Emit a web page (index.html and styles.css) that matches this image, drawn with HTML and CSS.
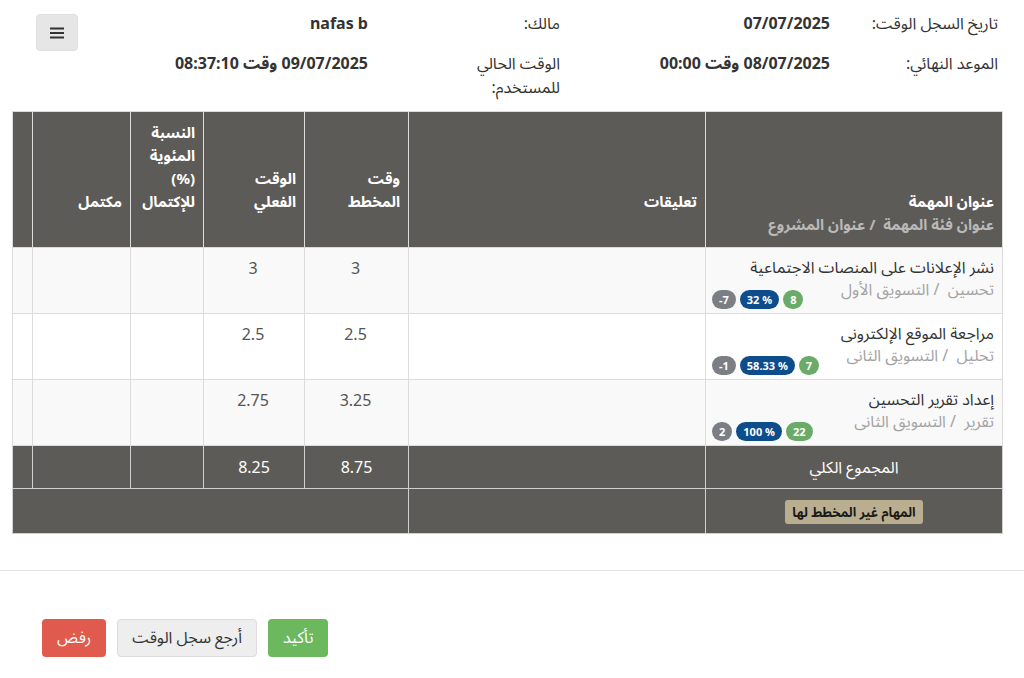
FILE: index.html
```html
<!DOCTYPE html>
<html lang="ar" dir="rtl">
<head>
    <meta charset="UTF-8">
    <meta name="viewport" content="width=device-width, initial-scale=1.0">
    <title>سجل الوقت</title>
    <link rel="stylesheet" href="styles.css">
</head>
<body>
    <!-- Timesheet details -->
    <div class="sheet-body">
        <div class="info-grid">
            <div class="info-label">تاريخ السجل الوقت:</div>
            <div class="info-value">07/07/2025</div>
            <div class="info-label narrow">مالك:</div>
            <div class="info-value owner">
                <span>nafas b</span>
                <button class="menu-btn" type="button">
                    <svg width="14" height="12" viewBox="0 0 14 12">
                        <rect x="0" y="0.5" width="14" height="2" fill="#333"/>
                        <rect x="0" y="5" width="14" height="2" fill="#333"/>
                        <rect x="0" y="9.5" width="14" height="2" fill="#333"/>
                    </svg>
                </button>
            </div>

            <div class="info-label">الموعد النهائي:</div>
            <div class="info-value">08/07/2025 وقت 00:00</div>
            <div class="info-label narrow">الوقت الحالي للمستخدم:</div>
            <div class="info-value">09/07/2025 وقت 08:37:10</div>
        </div>

        <table class="task-table">
            <colgroup>
                <col class="c-title">
                <col class="c-comment">
                <col class="c-plan">
                <col class="c-actual">
                <col class="c-percent">
                <col class="c-done">
                <col class="c-extra">
            </colgroup>
            <thead>
                <tr>
                    <th class="th-title">
                        عنوان المهمة
                        <span class="th-sub">عنوان فئة المهمة&nbsp; / عنوان المشروع</span>
                    </th>
                    <th>تعليقات</th>
                    <th>وقت<br>المخطط</th>
                    <th>الوقت<br>الفعلي</th>
                    <th>النسبة<br>المئوية<br>(%)<br>للإكتمال</th>
                    <th>مكتمل</th>
                    <th></th>
                </tr>
            </thead>
            <tbody>
                <tr>
                    <td>
                        <div class="task-name">نشر الإعلانات على المنصات الاجتماعية</div>
                        <div class="task-meta">
                            <span class="task-sub">تحسين&nbsp; / التسويق الأول</span>
                            <span class="badges">
                                <span class="badge green">8</span>
                                <span class="badge blue">32 %</span>
                                <span class="badge gray">-7</span>
                            </span>
                        </div>
                    </td>
                    <td></td>
                    <td class="num">3</td>
                    <td class="num">3</td>
                    <td></td>
                    <td></td>
                    <td></td>
                </tr>
                <tr>
                    <td>
                        <div class="task-name">مراجعة الموقع الإلكترونى</div>
                        <div class="task-meta">
                            <span class="task-sub">تحليل&nbsp; / التسويق الثانى</span>
                            <span class="badges">
                                <span class="badge green">7</span>
                                <span class="badge blue">58.33 %</span>
                                <span class="badge gray">-1</span>
                            </span>
                        </div>
                    </td>
                    <td></td>
                    <td class="num">2.5</td>
                    <td class="num">2.5</td>
                    <td></td>
                    <td></td>
                    <td></td>
                </tr>
                <tr>
                    <td>
                        <div class="task-name">إعداد تقرير التحسين</div>
                        <div class="task-meta">
                            <span class="task-sub">تقرير&nbsp; / التسويق الثانى</span>
                            <span class="badges">
                                <span class="badge green">22</span>
                                <span class="badge blue">100 %</span>
                                <span class="badge gray">2</span>
                            </span>
                        </div>
                    </td>
                    <td></td>
                    <td class="num">3.25</td>
                    <td class="num">2.75</td>
                    <td></td>
                    <td></td>
                    <td></td>
                </tr>
            </tbody>
            <tfoot>
                <tr class="total-row">
                    <td>المجموع الكلي</td>
                    <td></td>
                    <td>8.75</td>
                    <td>8.25</td>
                    <td></td>
                    <td></td>
                    <td></td>
                </tr>
                <tr class="unplanned-row">
                    <td><span class="unplanned">المهام غير المخطط لها</span></td>
                    <td></td>
                    <td colspan="5"></td>
                </tr>
            </tfoot>
        </table>
    </div>

    <!-- Actions -->
    <div class="sheet-footer">
        <button class="btn btn-confirm" type="button">تأكيد</button>
        <button class="btn btn-return" type="button">أرجع سجل الوقت</button>
        <button class="btn btn-reject" type="button">رفض</button>
    </div>
</body>
</html>
```

FILE: styles.css
```css
* {
    margin: 0;
    padding: 0;
    box-sizing: border-box;
}

body {
    font-family: "Noto Sans", "Noto Sans Arabic", "DejaVu Sans", sans-serif;
    font-size: 16px;
    line-height: 24px;
    color: #333;
    background-color: #fff;
}

/* Body Section */
.sheet-body {
    padding: 11px 21px 36px 13px;
}

/* Info Grid */
.info-grid {
    display: grid;
    grid-template-columns: 168px 270px 192px 1fr;
    padding-right: 5px;
}

.info-label {
    color: #333;
}

.info-label.narrow {
    max-width: 96px;
}

.info-value {
    font-weight: bold;
    color: #333;
}

.info-value.owner {
    display: flex;
    justify-content: space-between;
    align-items: flex-start;
}

/* Menu Button */
.menu-btn {
    display: flex;
    align-items: center;
    justify-content: center;
    width: 42px;
    height: 37px;
    margin-top: 3px;
    margin-left: 23px;
    background-color: #e6e6e6;
    border: 1px solid #e0e0e0;
    border-radius: 4px;
    cursor: pointer;
}

/* Task Table */
.task-table {
    width: 990px;
    margin-top: 12px;
    border-collapse: collapse;
    table-layout: fixed;
}

.c-title { width: 297px; }
.c-comment { width: 297px; }
.c-plan { width: 104px; }
.c-actual { width: 101px; }
.c-percent { width: 73px; }
.c-done { width: 98px; }
.c-extra { width: 20px; }

.task-table th,
.task-table td {
    border: 1px solid #dcdcdc;
}

.task-table th {
    background-color: #5d5b57;
    color: #fff;
    font-size: 15px;
    font-weight: bold;
    text-align: right;
    vertical-align: bottom;
    line-height: 23px;
    padding: 9px 8px 34px 8px;
}

.task-table th.th-title {
    padding-bottom: 11px;
}

.th-sub {
    display: block;
    color: #b9b9b9;
}

.task-table tbody td {
    vertical-align: top;
    padding: 8px 8px 4px 6px;
    height: 66px;
    color: #555;
}

.task-table tbody tr:nth-child(odd) td {
    background-color: #f9f9f9;
}

.task-table td.num {
    text-align: center;
}

.task-name {
    color: #333;
    line-height: 22px;
}

.task-meta {
    display: flex;
    align-items: flex-start;
}

.task-sub {
    color: #a3a3a3;
    line-height: 22px;
}

.badges {
    display: flex;
    gap: 4px;
    margin-top: 12px;
    margin-right: auto;
}

.badge {
    display: inline-block;
    height: 19px;
    line-height: 19px;
    padding: 0 7px;
    border-radius: 10px;
    font-size: 11px;
    font-weight: bold;
    color: #fff;
    direction: ltr;
}

.badge.green { background-color: #6aab6a; }
.badge.blue { background-color: #0d4d8c; }
.badge.gray { background-color: #7b7e82; }

/* Totals */
.task-table tfoot td {
    background-color: #5d5b57;
    color: #fff;
    text-align: center;
    border-color: #d0d0d0;
}

.total-row td {
    height: 43px;
    padding: 8px;
}

.unplanned-row td {
    height: 45px;
    padding: 8px;
}

.unplanned {
    display: inline-block;
    background-color: #b9ae90;
    color: #1a1a1a;
    font-size: 13px;
    font-weight: bold;
    line-height: 18px;
    padding: 3px 7px;
    border-radius: 3px;
}

/* Footer Buttons */
.sheet-footer {
    display: flex;
    justify-content: flex-end;
    gap: 11px;
    border-top: 1px solid #e5e5e5;
    padding: 48px 42px 30px 42px;
}

.btn {
    height: 38px;
    padding: 0 14px;
    font-family: inherit;
    font-size: 16px;
    border-radius: 4px;
    border: 1px solid transparent;
    cursor: pointer;
}

.btn-confirm {
    background-color: #6bb85f;
    color: #fff;
}

.btn-return {
    background-color: #eeeeee;
    border-color: #dcdcdc;
    color: #333;
}

.btn-reject {
    background-color: #e05a4e;
    color: #fff;
}
```
